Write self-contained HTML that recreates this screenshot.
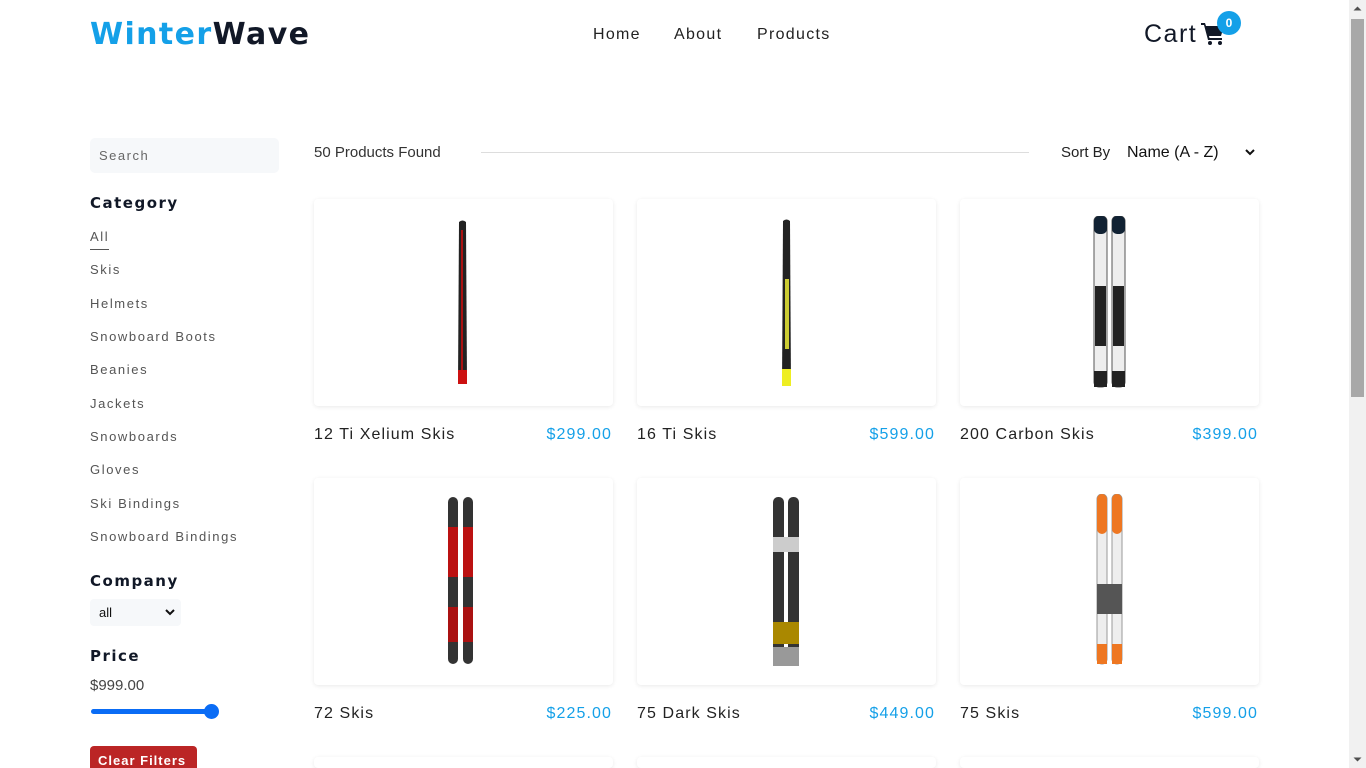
<!DOCTYPE html>
<html><head><meta charset="utf-8"><style>
*{margin:0;padding:0;box-sizing:border-box}
html,body{width:1366px;height:768px;overflow:hidden}
body{background:#fff;font-family:"Liberation Sans",sans-serif;color:#102a42;position:relative}
.logo{position:absolute;left:90px;top:17px;font-size:30px;font-weight:900;letter-spacing:1.4px;font-family:"DejaVu Sans","Liberation Sans",sans-serif}
.logo .a{color:#14a0e8}.logo .b{color:#111827}
.nav{position:absolute;top:26px;font-size:16px;letter-spacing:1.3px;color:#222}
.cart{position:absolute;left:1144px;top:20px;font-size:25px;letter-spacing:1.5px;color:#111827}
.badge{position:absolute;left:1217px;top:11px;width:24px;height:24px;border-radius:50%;background:#14a0e8;color:#fff;font-size:12px;font-weight:bold;text-align:center;line-height:24px}
.search{position:absolute;left:90px;top:138px;width:189px;height:35px;background:#f6f8fa;border-radius:5px;font-size:13px;letter-spacing:1.5px;color:#666;padding:10px 9px}
.h{position:absolute;left:90px;font-size:15px;font-weight:900;letter-spacing:1.5px;color:#111827;font-family:"DejaVu Sans",sans-serif}
.cat{position:absolute;left:90px;font-size:13px;letter-spacing:1.6px;color:#555}
.sel{position:absolute;left:90px;top:599px;width:91px;height:27px;background:#f6f8fa;border-radius:4px;font-size:13px;padding:6px 0 0 9px;color:#111}
.track{position:absolute;left:91px;top:709px;width:125px;height:5px;border-radius:3px;background:#0a6cf5}
.thumb{position:absolute;left:204px;top:704px;width:15px;height:15px;border-radius:50%;background:#0a6cf5}
.btn{position:absolute;left:90px;top:746px;width:107px;height:30px;background:#bb2525;border-radius:4px;color:#fff;font-size:13px;font-weight:bold;letter-spacing:1px;padding:7px 0 0 8px}
.card{position:absolute;width:299px;height:207px;background:#fff;border-radius:4px;box-shadow:0 1px 4px rgba(0,0,0,.09)}
.nm{position:absolute;font-size:16px;letter-spacing:1.1px;color:#222}
.pr{position:absolute;font-size:16px;letter-spacing:1.1px;color:#14a0e8;text-align:right;width:120px}
svg{position:absolute}
</style></head><body>
<div class="logo"><span class="a">Winter</span><span class="b">Wave</span></div>
<div class="nav" style="left:593px">Home</div>
<div class="nav" style="left:674px">About</div>
<div class="nav" style="left:757px">Products</div>
<div class="cart">Cart</div>
<svg style="left:1201px;top:22px" width="24" height="24" viewBox="0 0 24 24"><path d="M0 1h4l1 3h18l-3 10H8l.5 2H21v2H7L3 3H0z" fill="#111827"/><circle cx="9" cy="21" r="2" fill="#111827"/><circle cx="19" cy="21" r="2" fill="#111827"/></svg>
<div class="badge">0</div>
<div class="search">Search</div>
<div class="h" style="top:194px">Category</div>
<div class="cat" style="top:229px">All</div>
<div style="position:absolute;left:90px;top:249px;width:19px;height:1px;background:#555"></div>
<div class="cat" style="top:262px">Skis</div>
<div class="cat" style="top:296px">Helmets</div>
<div class="cat" style="top:329px">Snowboard Boots</div>
<div class="cat" style="top:362px">Beanies</div>
<div class="cat" style="top:396px">Jackets</div>
<div class="cat" style="top:429px">Snowboards</div>
<div class="cat" style="top:462px">Gloves</div>
<div class="cat" style="top:496px">Ski Bindings</div>
<div class="cat" style="top:529px">Snowboard Bindings</div>
<div class="h" style="top:572px">Company</div>
<div class="sel">all<svg style="left:75px;top:9px" width="10" height="8" viewBox="0 0 10 8"><path d="M1 2l4 4 4-4" stroke="#111" stroke-width="2" fill="none"/></svg></div>
<div class="h" style="top:647px">Price</div>
<div style="position:absolute;left:90px;top:677px;font-size:15px;color:#444">$999.00</div>
<div class="track"></div><div class="thumb"></div>
<div class="btn">Clear Filters</div>
<div style="position:absolute;left:314px;top:144px;font-size:15px;color:#333">50 Products Found</div>
<div style="position:absolute;left:481px;top:152px;width:548px;height:1px;background:#ddd"></div>
<div style="position:absolute;left:1061px;top:144px;font-size:15px;color:#222">Sort By</div>
<div style="position:absolute;left:1127px;top:144px;font-size:16px;color:#111">Name (A - Z)</div>
<svg style="left:1244px;top:147px" width="12" height="10" viewBox="0 0 12 10"><path d="M2 3l4 4 4-4" stroke="#111" stroke-width="2" fill="none"/></svg>

<div class="card" style="left:314px;top:199px"></div>
<div class="card" style="left:637px;top:199px"></div>
<div class="card" style="left:960px;top:199px"></div>
<div class="card" style="left:314px;top:478px"></div>
<div class="card" style="left:637px;top:478px"></div>
<div class="card" style="left:960px;top:478px"></div>
<div class="card" style="left:314px;top:757px;height:11px"></div>
<div class="card" style="left:637px;top:757px;height:11px"></div>
<div class="card" style="left:960px;top:757px;height:11px"></div>

<svg style="left:456px;top:220px" width="14" height="165"><path d="M3 2Q6.5-1 10 2L11 163H2z" fill="#222"/><rect x="5" y="10" width="2" height="150" fill="#a11"/><rect x="2" y="150" width="9" height="14" fill="#c11"/></svg>
<svg style="left:780px;top:219px" width="14" height="168"><path d="M3 2Q6.5-1 10 2L11 167H2z" fill="#222"/><rect x="5" y="60" width="4" height="70" fill="#cc3"/><rect x="2" y="150" width="9" height="17" fill="#ee2"/></svg>
<svg style="left:1092px;top:216px" width="36" height="172"><rect x="2" y="0" width="13" height="171" rx="5" fill="#eee" stroke="#555"/><rect x="20" y="0" width="13" height="171" rx="5" fill="#eee" stroke="#555"/><rect x="2" y="0" width="13" height="18" rx="5" fill="#123"/><rect x="20" y="0" width="13" height="18" rx="5" fill="#123"/><rect x="3" y="70" width="11" height="60" fill="#222"/><rect x="21" y="70" width="11" height="60" fill="#222"/><rect x="2" y="155" width="13" height="16" fill="#222"/><rect x="20" y="155" width="13" height="16" fill="#222"/></svg>
<svg style="left:446px;top:497px" width="30" height="168"><rect x="2" y="0" width="10" height="167" rx="5" fill="#333"/><rect x="17" y="0" width="10" height="167" rx="5" fill="#333"/><rect x="2" y="30" width="10" height="50" fill="#b11"/><rect x="17" y="30" width="10" height="50" fill="#b11"/><rect x="2" y="110" width="10" height="35" fill="#a11"/><rect x="17" y="110" width="10" height="35" fill="#a11"/></svg>
<svg style="left:771px;top:497px" width="30" height="170"><rect x="2" y="0" width="11" height="169" rx="5" fill="#333"/><rect x="17" y="0" width="11" height="169" rx="5" fill="#333"/><rect x="2" y="40" width="26" height="15" fill="#ccc"/><rect x="2" y="125" width="26" height="22" fill="#a80"/><rect x="2" y="150" width="26" height="19" fill="#999"/></svg>
<svg style="left:1095px;top:494px" width="30" height="171"><rect x="2" y="0" width="10" height="170" rx="5" fill="#eee" stroke="#999"/><rect x="17" y="0" width="10" height="170" rx="5" fill="#eee" stroke="#999"/><rect x="2" y="0" width="10" height="40" rx="5" fill="#e72"/><rect x="17" y="0" width="10" height="40" rx="5" fill="#e72"/><rect x="2" y="90" width="25" height="30" fill="#555"/><rect x="2" y="150" width="10" height="20" fill="#e72"/><rect x="17" y="150" width="10" height="20" fill="#e72"/></svg>

<div class="nm" style="left:314px;top:426px">12 Ti Xelium Skis</div><div class="pr" style="left:492px;top:426px">$299.00</div>
<div class="nm" style="left:637px;top:426px">16 Ti Skis</div><div class="pr" style="left:815px;top:426px">$599.00</div>
<div class="nm" style="left:960px;top:426px">200 Carbon Skis</div><div class="pr" style="left:1138px;top:426px">$399.00</div>
<div class="nm" style="left:314px;top:705px">72 Skis</div><div class="pr" style="left:492px;top:705px">$225.00</div>
<div class="nm" style="left:637px;top:705px">75 Dark Skis</div><div class="pr" style="left:815px;top:705px">$449.00</div>
<div class="nm" style="left:960px;top:705px">75 Skis</div><div class="pr" style="left:1138px;top:705px">$599.00</div>

<div style="position:absolute;left:1349px;top:0;width:17px;height:768px;background:#f1f1f1"></div>
<div style="position:absolute;left:1351px;top:19px;width:13px;height:378px;background:#a8a8a8"></div>
<svg style="left:1352px;top:4px" width="11" height="8"><path d="M1.5 6.5L5.5 2.5 9.5 6.5z" fill="#505050"/></svg>
<svg style="left:1352px;top:756px" width="11" height="8"><path d="M1.5 1.5L5.5 5.5 9.5 1.5z" fill="#505050"/></svg>
</body></html>
